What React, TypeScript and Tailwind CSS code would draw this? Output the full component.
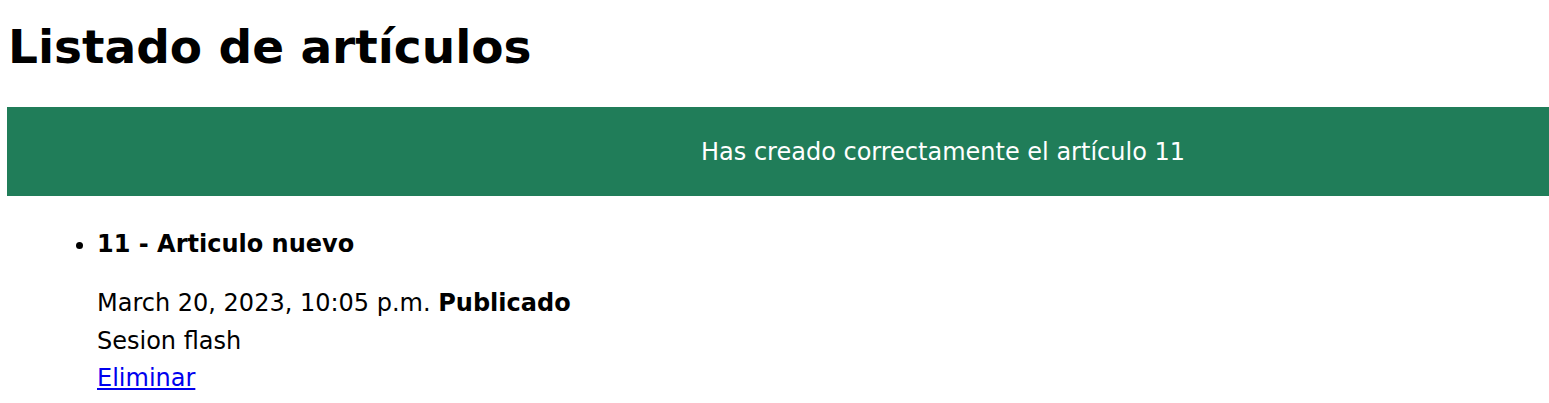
import React from 'react'

export default function App() {
  return (
    <div className="min-h-[403px] bg-white font-['DejaVu_Sans',sans-serif] text-black">
      <h1 className="pl-2 pt-[15px] text-[47px] font-bold leading-[64px]">Listado de artículos</h1>
      <div className="mt-[28px] ml-[7px] flex h-[89px] items-center bg-[#207d59] pl-[694px] text-[24px] text-white">
        Has creado correctamente el artículo 11
      </div>
      <ul className="mt-[29px] list-disc pl-[97px]">
        <li className="text-[24px] font-bold leading-[38px]">11 - Articulo nuevo</li>
      </ul>
      <div className="mt-[22px] pl-[97px] text-[24px] leading-[37.5px]">
        <p>
          March 20, 2023, 10:05 p.m. <b>Publicado</b>
        </p>
        <p>Sesion flash</p>
        <a href="#" className="text-[#0000ee] underline">
          Eliminar
        </a>
      </div>
    </div>
  )
}
